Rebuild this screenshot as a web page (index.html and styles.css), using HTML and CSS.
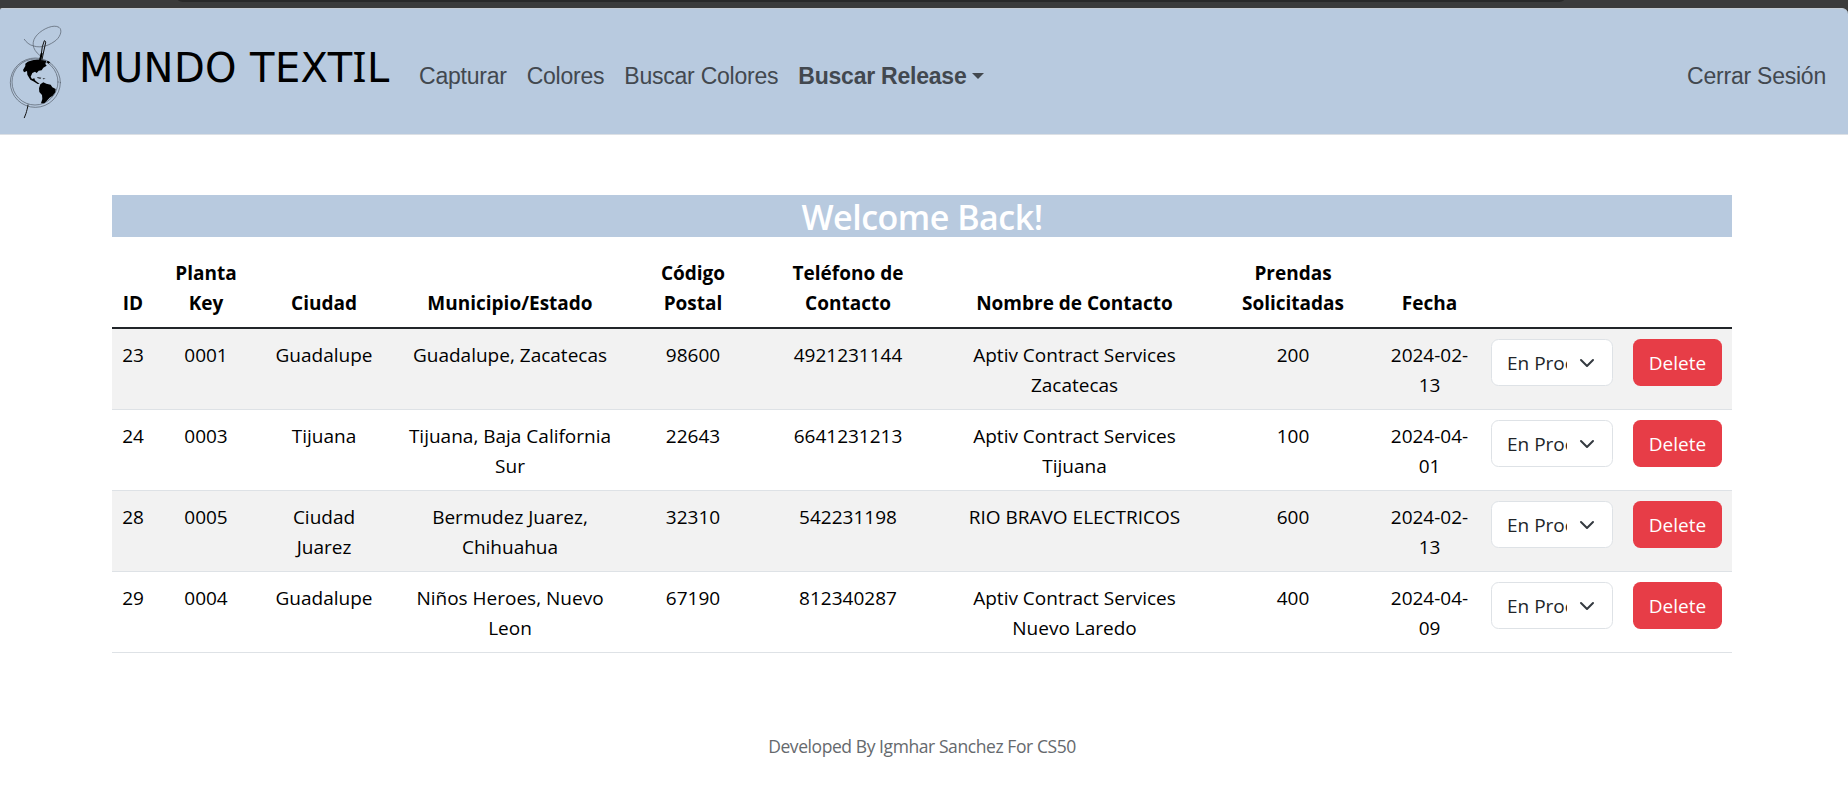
FILE: index.html
```html
<!DOCTYPE html>
<html lang="es">
<head>
<meta charset="utf-8">
<title>Mundo Textil</title>
<link rel="stylesheet" href="styles.css">
</head>
<body>
<div class="chrome"><div class="chrome-pill"></div></div>
<nav class="navbar">
  <a class="brand">
    <svg class="logo" viewBox="24 66 162 288" fill="none" stroke-linecap="round">
      <g stroke="#59636f" stroke-width="2.2">
        <ellipse cx="106" cy="245" rx="75" ry="74"/>
        <ellipse cx="105" cy="243" rx="69" ry="69"/>
        <path d="M73 115C79 124 88 132 101 135C126 143 152 131 169 117C183 104 187 86 177 79C161 69 129 83 112 101C94 120 94 143 119 163"/>
      </g>
      <path stroke="#111" stroke-width="3" d="M84 312C83 320 80 330 78 337L73 350"/>
      <g fill="#000">
        <path d="M76 188C87 178 104 175 121 177L139 179L136 189L140 194L130 200L125 208L116 209L110 216L105 212L97 216L92 227L96 234L103 232L105 238L111 243L119 248L113 249L100 241L91 236L82 221L81 210L72 214L69 207L76 195Z"/>
        <path d="M121 250L130 244L139 248L152 251L157 259L167 264L166 274L158 284L149 290L140 300L133 307H123L127 294L126 282L118 273L117 262Z"/>
        <path d="M143 179L151 184L146 188L140 184ZM112 229L124 230L121 233L112 231ZM128 232L137 233L130 235Z"/>
      </g>
      <path stroke="#111" stroke-width="3" d="M121 180L127 137L133 119C137 120 138 124 136 129L125 180"/>
      <path stroke="#000" stroke-width="6" d="M120 178L125 158"/>
    </svg>
    <span class="brand-name">MUNDO TEXT<span class="brand-i">I</span>L</span>
  </a>
  <div class="links">
    <a class="link">Capturar</a>
    <a class="link">Colores</a>
    <a class="link">Buscar Colores</a>
    <a class="link strong">Buscar Release<span class="caret"></span></a>
  </div>
  <a class="link logout">Cerrar Sesión</a>
</nav>
<main class="container">
  <h2 class="welcome">Welcome Back!</h2>
  <table class="table">
    <colgroup><col class="c-id"><col class="c-key"><col class="c-city"><col class="c-state"><col class="c-zip"><col class="c-tel"><col class="c-name"><col class="c-qty"><col class="c-date"><col class="c-status"><col class="c-del"></colgroup>
    <thead>
      <tr><th>ID</th><th>Planta Key</th><th>Ciudad</th><th>Municipio/Estado</th><th>Código Postal</th><th>Teléfono de Contacto</th><th>Nombre de Contacto</th><th>Prendas Solicitadas</th><th>Fecha</th><th></th><th></th></tr>
    </thead>
    <tbody>
      <tr><td>23</td><td>0001</td><td>Guadalupe</td><td>Guadalupe, Zacatecas</td><td>98600</td><td>4921231144</td><td>Aptiv Contract Services Zacatecas</td><td>200</td><td>2024-02-<br>13</td><td class="ctl"><div class="select"><span class="value">En Proceso</span><svg class="chevron" viewBox="0 0 16 16"><path d="m2 5 6 6 6-6"/></svg></div></td><td class="ctl"><button class="delete">Delete</button></td></tr>
      <tr><td>24</td><td>0003</td><td>Tijuana</td><td>Tijuana, Baja California Sur</td><td>22643</td><td>6641231213</td><td>Aptiv Contract Services Tijuana</td><td>100</td><td>2024-04-<br>01</td><td class="ctl"><div class="select"><span class="value">En Proceso</span><svg class="chevron" viewBox="0 0 16 16"><path d="m2 5 6 6 6-6"/></svg></div></td><td class="ctl"><button class="delete">Delete</button></td></tr>
      <tr><td>28</td><td>0005</td><td>Ciudad Juarez</td><td>Bermudez Juarez, Chihuahua</td><td>32310</td><td>542231198</td><td>RIO BRAVO ELECTRICOS</td><td>600</td><td>2024-02-<br>13</td><td class="ctl"><div class="select"><span class="value">En Proceso</span><svg class="chevron" viewBox="0 0 16 16"><path d="m2 5 6 6 6-6"/></svg></div></td><td class="ctl"><button class="delete">Delete</button></td></tr>
      <tr><td>29</td><td>0004</td><td>Guadalupe</td><td>Niños Heroes, Nuevo Leon</td><td>67190</td><td>812340287</td><td>Aptiv Contract Services Nuevo Laredo</td><td>400</td><td>2024-04-<br>09</td><td class="ctl"><div class="select"><span class="value">En Proceso</span><svg class="chevron" viewBox="0 0 16 16"><path d="m2 5 6 6 6-6"/></svg></div></td><td class="ctl"><button class="delete">Delete</button></td></tr>
    </tbody>
  </table>
</main>
<footer class="footer">Developed By Igmhar Sanchez For CS50</footer>
</body>
</html>
```

FILE: styles.css
```css
* { box-sizing: border-box; }
html { background: #fff; }
body {
  margin: 0;
  height: 807px;
  overflow: hidden;
  font: 19px/30px "Open Sans", "Noto Sans", sans-serif;
  color: #000;
  background: linear-gradient(#3b3b3b 0 16px, #fff 16px);
}
.chrome { height: 8px; background: #3b3b3b; }
.chrome-pill {
  height: 2px;
  margin: 0 284px 0 178px;
  background: #292929;
  border-radius: 0 0 8px 8px / 0 0 2px 2px;
}
.navbar {
  display: flex;
  height: 127px;
  padding: 14px 22px 0 8px;
  background: #b8cadf;
  border-top: 1px solid #c5ccd4;
  border-bottom: 1px solid #dce0e5;
  border-radius: 2px 6px 0 0;
  font-family: "Liberation Sans", Arial, sans-serif;
}
.brand { display: flex; }
.logo { width: 54px; height: 96px; }
.brand-name {
  width: 340px;
  margin: 20px 0 0 17px;
  font: 40px/50px "DejaVu Sans", Verdana, sans-serif;
  letter-spacing: 0.4px;
  color: #000;
  white-space: nowrap;
}
.brand-i { font-family: "Noto Sans", sans-serif; font-size: 41px; line-height: 1; }
.links { display: flex; gap: 20px; }
.link {
  margin-top: 38px;
  font-size: 23px;
  letter-spacing: -0.23px;
  line-height: 30px;
  color: #42484f;
  white-space: nowrap;
}
.strong { font-weight: 700; }
.caret {
  display: inline-block;
  margin-left: 6px;
  vertical-align: 5px;
  border: 6px solid transparent;
  border-top-color: #42484f;
  border-bottom: 0;
}
.logout { margin-left: auto; }
.container { width: 1620px; margin: 60px 0 0 112px; }
.welcome {
  height: 42px;
  margin: 0 0 11px;
  background: #b8cadf;
  color: #fff;
  font-size: 34px;
  font-weight: 600;
  letter-spacing: -0.5px;
  line-height: 44px;
  text-align: center;
}
.table { width: 1620px; table-layout: fixed; border-collapse: separate; border-spacing: 0; }
.c-id { width: 41px; }
.c-key { width: 105px; }
.c-city { width: 131px; }
.c-state { width: 241px; }
.c-zip { width: 125px; }
.c-tel { width: 185px; }
.c-name { width: 268px; }
.c-qty { width: 169px; }
.c-date { width: 104px; }
.c-status { width: 142px; }
.c-del { width: 109px; }
th, td { padding: 10px 8px 10px 9px; text-align: center; vertical-align: top; }
th { height: 81px; padding-bottom: 9px; vertical-align: bottom; font-weight: 700; border-bottom: 2px solid #212529; }
td { height: 81px; padding-top: 11px; padding-bottom: 9px; border-bottom: 1px solid #dee2e6; }
td.ctl { padding: 10px; }
tbody tr:nth-child(odd) { background: #f2f2f2; }
.select {
  display: flex;
  align-items: center;
  height: 47px;
  padding: 0 17px 0 15px;
  border: 1px solid #dee2e6;
  border-radius: 7.5px;
  background: #fff;
  color: #212529;
}
.value { width: 60px; margin-right: 12px; overflow: hidden; white-space: nowrap; text-align: left; }
.chevron { flex: none; width: 16px; height: 16px; }
.chevron path { fill: none; stroke: #343a40; stroke-width: 2; stroke-linecap: round; stroke-linejoin: round; }
.delete {
  display: block;
  width: 89px;
  height: 47px;
  padding: 0;
  border: 0;
  border-radius: 7.5px;
  background: #e73d47;
  color: #fff;
  font: inherit;
}
.footer { width: 1620px; margin: 78px 0 0 112px; text-align: center; font-size: 17.5px; letter-spacing: -0.42px; color: #65696d; }
```
